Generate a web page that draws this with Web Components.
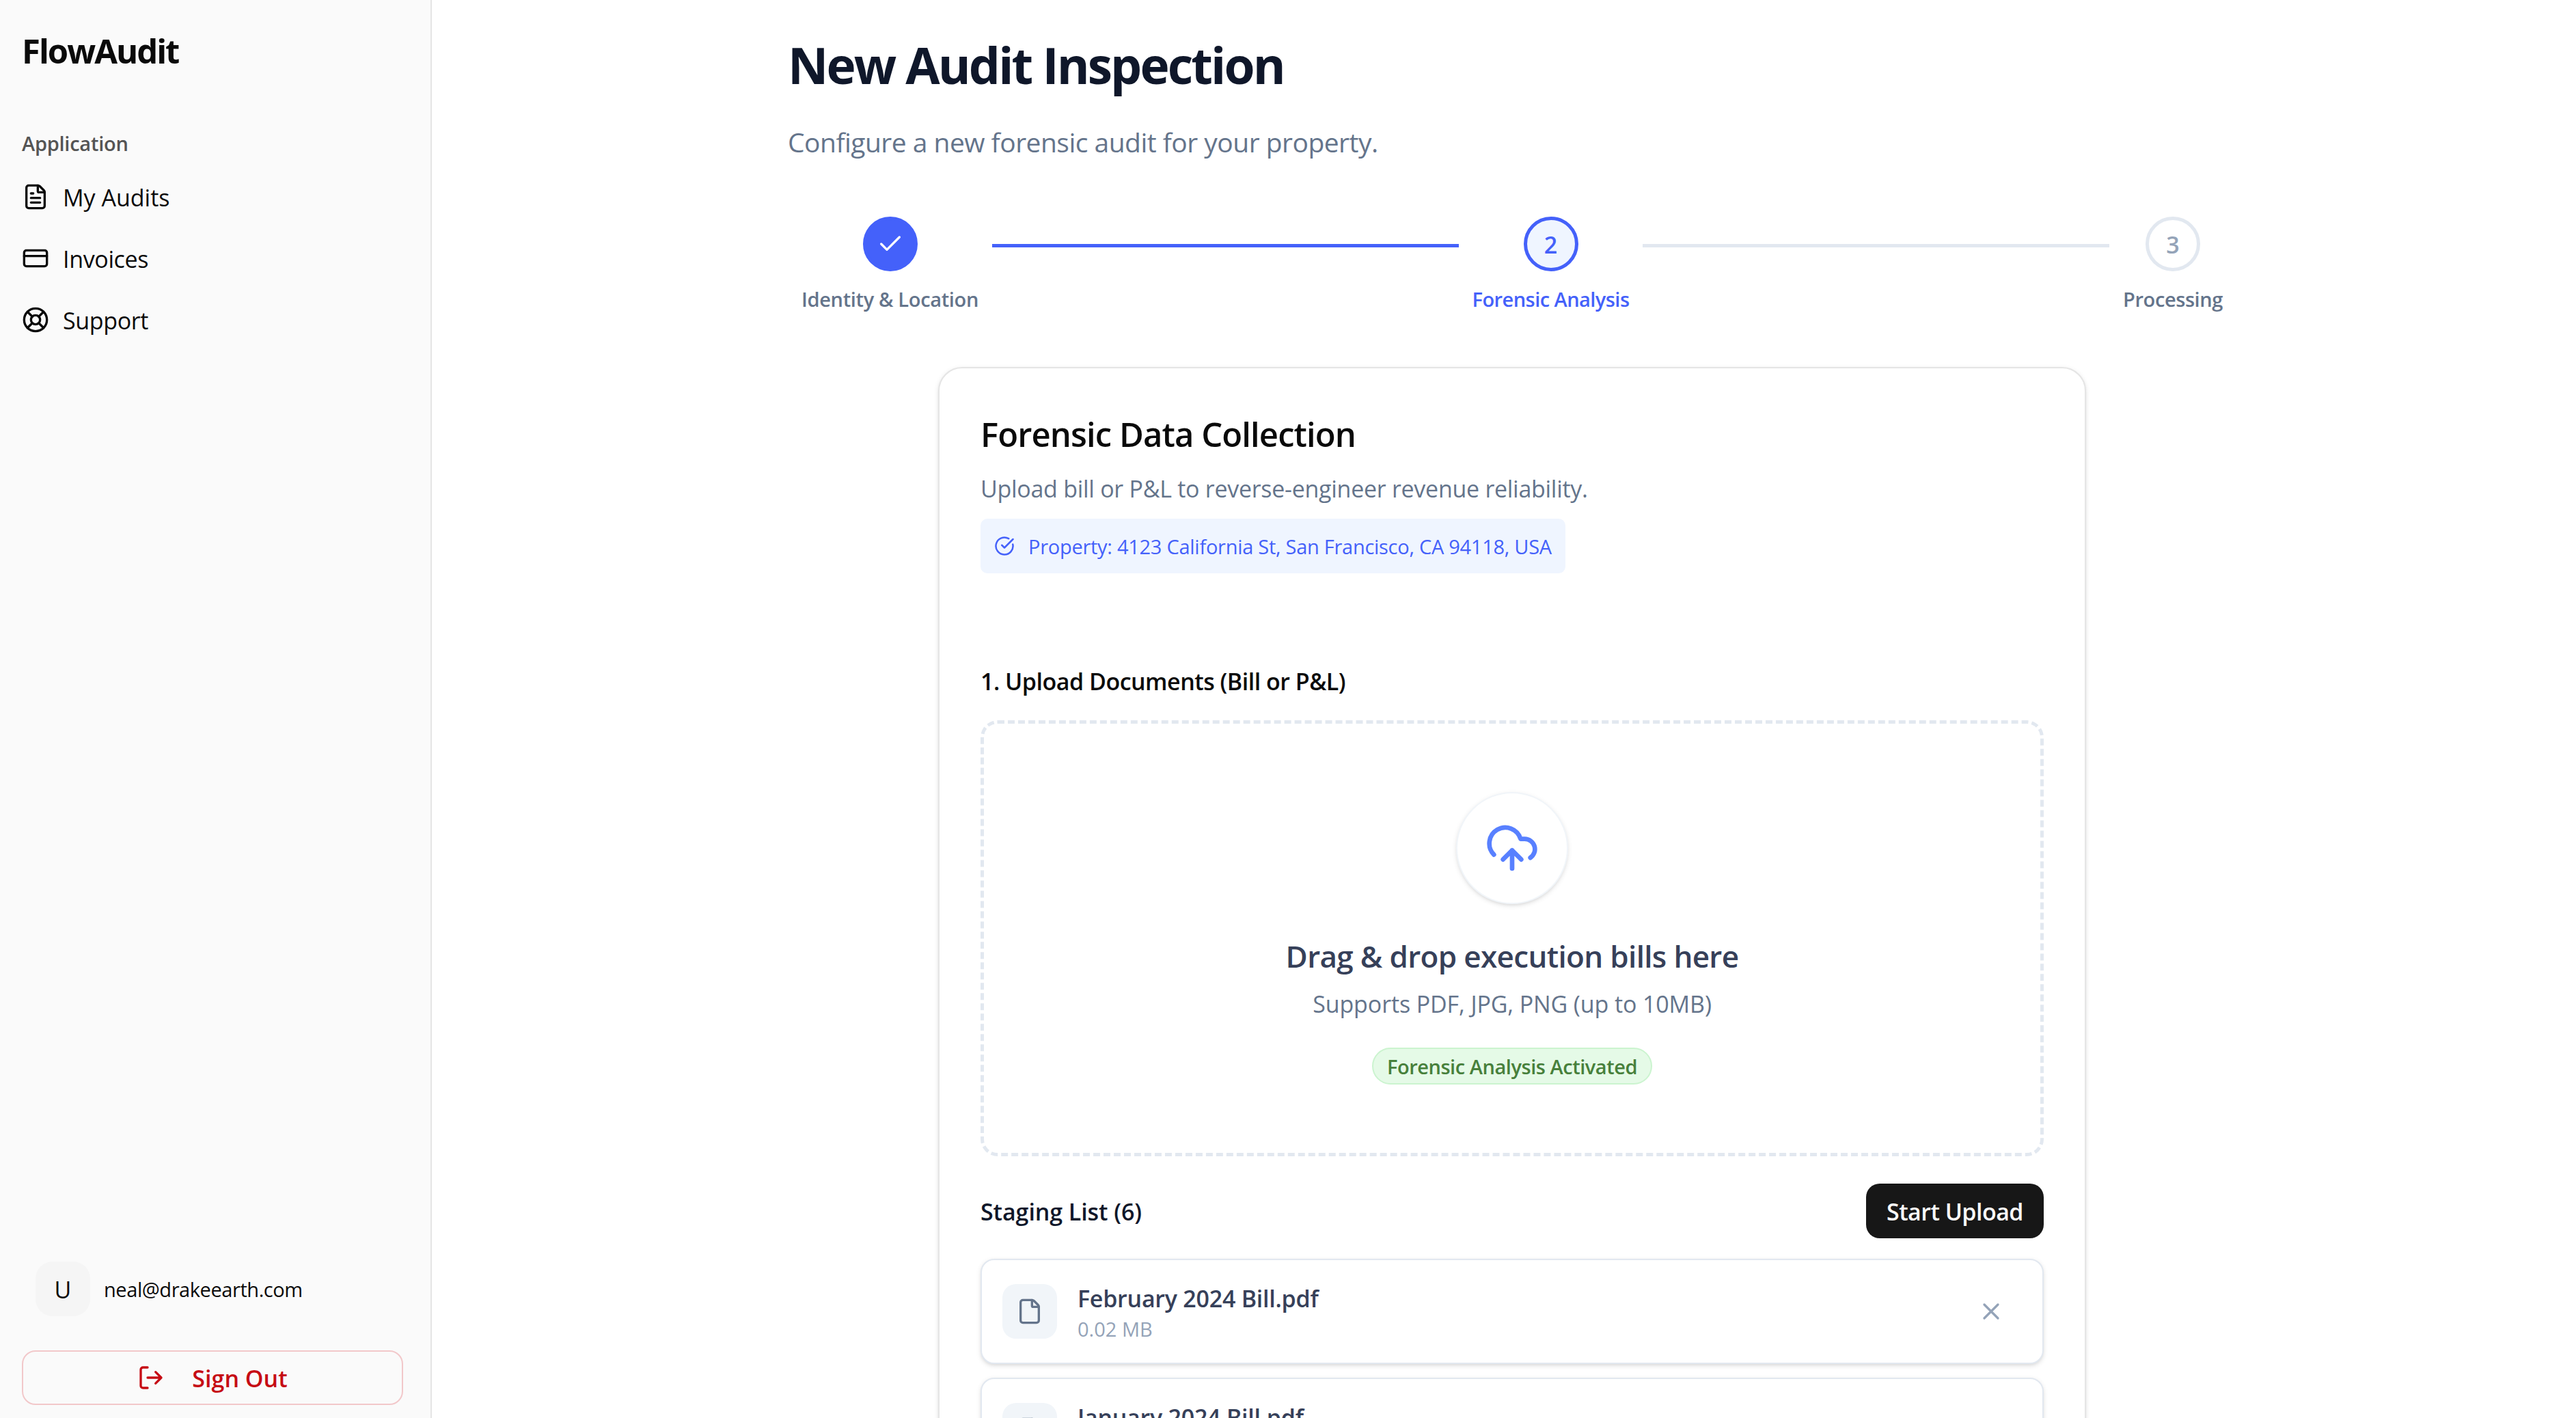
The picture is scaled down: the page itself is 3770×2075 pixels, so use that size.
<!DOCTYPE html>
<html lang="en">
<head>
<meta charset="utf-8">
<title>FlowAudit</title>
<style>
	body {
		background-color: #fff;
		color: #0a0a0a;
		font-family: 'Open Sans', 'Noto Sans', sans-serif;
		height: 2075px;
		margin: 0;
		overflow: hidden;
	}
</style>
</head>
<body>
<flow-app></flow-app>
<script>
const ICONS = {
	'file-text': '<path d="M6 22a2 2 0 0 1-2-2V4a2 2 0 0 1 2-2h8a2.4 2.4 0 0 1 1.704.706l3.588 3.588A2.4 2.4 0 0 1 20 8v12a2 2 0 0 1-2 2z"/><path d="M14 2v5a1 1 0 0 0 1 1h5M10 9H8M16 13H8M16 17H8"/>',
	'credit-card': '<rect width="20" height="14" x="2" y="5" rx="2"/><path d="M2 10h20"/>',
	'life-buoy': '<circle cx="12" cy="12" r="10"/><path d="m4.93 4.93 4.24 4.24M14.83 9.17l4.24-4.24M14.83 14.83l4.24 4.24M9.17 14.83l-4.24 4.24"/><circle cx="12" cy="12" r="4"/>',
	'log-out': '<path d="M9 21H5a2 2 0 0 1-2-2V5a2 2 0 0 1 2-2h4M16 17l5-5-5-5M21 12H9"/>',
	'check': '<path d="M20 6 9 17l-5-5"/>',
	'circle-check': '<path d="M21.801 10A10 10 0 1 1 17 3.335M9 11l3 3L22 4"/>',
	'cloud-upload': '<path d="M12 13v8M4 14.899A7 7 0 1 1 15.71 8h1.79a4.5 4.5 0 0 1 2.5 8.242M8 17l4-4 4 4"/>',
	'file': '<path d="M6 22a2 2 0 0 1-2-2V4a2 2 0 0 1 2-2h8a2.4 2.4 0 0 1 1.704.706l3.588 3.588A2.4 2.4 0 0 1 20 8v12a2 2 0 0 1-2 2z"/><path d="M14 2v5a1 1 0 0 0 1 1h5"/>',
	'x': '<path d="M18 6 6 18M6 6l12 12"/>'
};

class FlowIcon extends HTMLElement {
	constructor() {
		super();
		this.attachShadow({ mode: 'open' });
	}

	connectedCallback() {
		const size = this.getAttribute('size') || 40;
		this.shadowRoot.innerHTML = `
			<style>
				:host {
					display: block;
					flex: none;
					height: ${size}px;
					width: ${size}px;
				}
				svg {
					display: block;
					fill: none;
					stroke: currentColor;
					stroke-linecap: round;
					stroke-linejoin: round;
					stroke-width: 2;
				}
			</style>
			<svg width='${size}' height='${size}' viewBox='0 0 24 24'>${ICONS[this.getAttribute('name')]}</svg>
		`;
	}
}

// One line of text: size, line (height), weight and track (letter spacing) in px
class FlowText extends HTMLElement {
	constructor() {
		super();
		this.attachShadow({ mode: 'open' });
	}

	connectedCallback() {
		const size = this.getAttribute('size') || 34;
		const line = this.getAttribute('line') || 50;
		const weight = this.getAttribute('weight') || 400;
		const track = this.getAttribute('track') || 0;
		this.shadowRoot.innerHTML = `
			<style>
				:host {
					display: block;
					flex: none;
					font-size: ${size}px;
					font-weight: ${weight};
					height: ${line}px;
					letter-spacing: ${track}px;
					line-height: calc(${line}px + 0.08em);
					white-space: nowrap;
				}
			</style>
			<slot></slot>
		`;
	}
}

class FlowNavItem extends HTMLElement {
	constructor() {
		super();
		this.attachShadow({ mode: 'open' });
		this.shadowRoot.innerHTML = `
			<style>
				:host {
					align-items: center;
					display: flex;
					gap: 20px;
					height: 80px;
				}
			</style>
			<flow-icon name='${this.getAttribute('icon')}'></flow-icon>
			<slot></slot>
		`;
	}
}

class FlowSidebar extends HTMLElement {
	constructor() {
		super();
		this.attachShadow({ mode: 'open' });
		this.shadowRoot.innerHTML = `
			<style>
				:host {
					background-color: #fafafa;
					border-right: 2px solid #e5e5e5;
					box-sizing: border-box;
					display: flex;
					flex: none;
					flex-direction: column;
					height: 2075px;
					padding: 38px 40px 19px 32px;
					width: 632px;
				}
				.label {
					color: #545454;
					margin-top: 81px;
				}
				nav {
					display: flex;
					flex-direction: column;
					gap: 10px;
					margin-top: 19px;
				}
				.user {
					align-items: center;
					display: flex;
					gap: 20px;
					margin-top: auto;
					padding-left: 20px;
				}
				.avatar {
					align-items: center;
					background-color: #f5f5f5;
					border-radius: 25px;
					display: flex;
					height: 80px;
					justify-content: center;
					width: 80px;
				}
				button {
					align-items: center;
					background: none;
					border: 2px solid #f2c8ca;
					border-radius: 20px;
					box-sizing: border-box;
					color: #c60c14;
					display: flex;
					font-family: inherit;
					gap: 40px;
					height: 80px;
					justify-content: center;
					margin-top: 50px;
					padding: 0;
					width: 558px;
				}
			</style>
			<flow-text size='49' line='70' weight='700' track='-2'>FlowAudit</flow-text>
			<flow-text class='label' size='29' line='40' weight='600' track='-0.25'>Application</flow-text>
			<nav>
				<flow-nav-item icon='file-text'><flow-text>My Audits</flow-text></flow-nav-item>
				<flow-nav-item icon='credit-card'><flow-text track='-0.35'>Invoices</flow-text></flow-nav-item>
				<flow-nav-item icon='life-buoy'><flow-text track='-0.35'>Support</flow-text></flow-nav-item>
			</nav>
			<div class='user'>
				<div class='avatar'><flow-text>U</flow-text></div>
				<flow-text size='29' line='40' track='-0.43'>neal@drakeearth.com</flow-text>
			</div>
			<button type='button'>
				<flow-icon name='log-out'></flow-icon>
				<flow-text weight='600'>Sign Out</flow-text>
			</button>
		`;
	}
}

class FlowStep extends HTMLElement {
	constructor() {
		super();
		this.attachShadow({ mode: 'open' });
		this.shadowRoot.innerHTML = `
			<style>
				:host {
					align-items: center;
					color: #64748b;
					display: flex;
					flex: none;
					flex-direction: column;
					gap: 20px;
					padding: 0 20px;
				}
				.dot {
					align-items: center;
					background-color: #fff;
					border: 5px solid #e2e8f0;
					border-radius: 50%;
					box-sizing: border-box;
					color: #94a3b8;
					display: flex;
					height: 80px;
					justify-content: center;
					width: 80px;
				}
				:host([state='done']) .dot {
					background-color: #4461fa;
					border-color: #4461fa;
					color: #fff;
				}
				:host([state='current']) {
					color: #4461fa;
				}
				:host([state='current']) .dot {
					background-color: #eff5ff;
					border-color: #4461fa;
					color: #4461fa;
				}
			</style>
			<div class='dot'><slot name='mark'></slot></div>
			<slot></slot>
		`;
	}
}

class FlowStepper extends HTMLElement {
	constructor() {
		super();
		this.attachShadow({ mode: 'open' });
		this.shadowRoot.innerHTML = `
			<style>
				:host {
					display: flex;
				}
				.line {
					background-color: #e2e8f0;
					flex: 1;
					height: 5px;
					margin-top: 40px;
				}
				.line.done {
					background-color: #4461fa;
				}
			</style>
			<flow-step state='done'>
				<flow-icon slot='mark' name='check'></flow-icon>
				<flow-text size='29' line='40' weight='600' track='-0.34'>Identity &amp; Location</flow-text>
			</flow-step>
			<div class='line done'></div>
			<flow-step state='current'>
				<flow-text slot='mark' weight='600'>2</flow-text>
				<flow-text size='29' line='40' weight='600' track='-0.55'>Forensic Analysis</flow-text>
			</flow-step>
			<div class='line'></div>
			<flow-step>
				<flow-text slot='mark' weight='600'>3</flow-text>
				<flow-text size='29' line='40' weight='600' track='-0.4'>Processing</flow-text>
			</flow-step>
		`;
	}
}

class FlowDropzone extends HTMLElement {
	constructor() {
		super();
		this.attachShadow({ mode: 'open' });
		this.shadowRoot.innerHTML = `
			<style>
				:host {
					align-items: center;
					border: 5px dashed #e2e8f0;
					border-radius: 25px;
					box-sizing: border-box;
					display: flex;
					flex-direction: column;
					height: 638px;
					padding-top: 100px;
				}
				.circle {
					background-color: #fff;
					border: 2px solid #f1f5f9;
					border-radius: 50%;
					box-shadow: 0 2.5px 7.5px rgba(0, 0, 0, 0.1), 0 2.5px 5px -2.5px rgba(0, 0, 0, 0.1);
					color: #5880ff;
					padding: 40px;
				}
				.title {
					color: #364059;
					margin-top: 40px;
				}
				.hint {
					color: #64748b;
					margin-top: 10px;
				}
				.badge {
					background-color: #e5fae7;
					border: 2px solid #cbf4cf;
					border-radius: 27px;
					box-sizing: border-box;
					color: #47803b;
					height: 54px;
					margin-top: 40px;
					padding: 5px 20px;
				}
			</style>
			<div class='circle'><flow-icon name='cloud-upload' size='80'></flow-icon></div>
			<flow-text class='title' size='44' line='70' weight='600' track='-0.66'>Drag &amp; drop execution bills here</flow-text>
			<flow-text class='hint' track='-0.12'>Supports PDF, JPG, PNG (up to 10MB)</flow-text>
			<div class='badge'><flow-text size='29' line='40' weight='600' track='-0.46'>Forensic Analysis Activated</flow-text></div>
		`;
	}
}

class FlowFile extends HTMLElement {
	constructor() {
		super();
		this.attachShadow({ mode: 'open' });
		this.shadowRoot.innerHTML = `
			<style>
				:host {
					align-items: center;
					background-color: #fff;
					border: 2px solid #e2e8f0;
					border-radius: 20px;
					box-shadow: 0 2.5px 7.5px rgba(0, 0, 0, 0.1), 0 2.5px 5px -2.5px rgba(0, 0, 0, 0.1);
					box-sizing: border-box;
					display: flex;
					gap: 30px;
					height: 154px;
					padding: 0 30px;
				}
				.thumb {
					align-items: center;
					background-color: #f1f5f9;
					border-radius: 20px;
					color: #64748b;
					display: flex;
					height: 80px;
					justify-content: center;
					width: 80px;
				}
				.info {
					flex: 1;
				}
				.name {
					color: #364059;
				}
				.size {
					color: #94a3b8;
				}
				.remove {
					color: #94a3b8;
					padding: 25px;
				}
			</style>
			<div class='thumb'><flow-icon name='file'></flow-icon></div>
			<div class='info'>
				<flow-text class='name' weight='600' track='-0.25'>${this.getAttribute('name')}</flow-text>
				<flow-text class='size' size='29' line='40'>${this.getAttribute('size')}</flow-text>
			</div>
			<div class='remove'><flow-icon name='x'></flow-icon></div>
		`;
	}
}

class FlowCollection extends HTMLElement {
	constructor() {
		super();
		this.attachShadow({ mode: 'open' });
		this.shadowRoot.innerHTML = `
			<style>
				:host {
					background-color: #fff;
					border: 2px solid #e5e5e5;
					border-radius: 35px;
					box-shadow: 0 2.5px 7.5px rgba(0, 0, 0, 0.1), 0 2.5px 5px -2.5px rgba(0, 0, 0, 0.1);
					box-sizing: border-box;
					display: block;
					padding: 60px;
					width: 1680px;
				}
				.desc {
					color: #64748b;
					margin-top: 20px;
				}
				.property {
					align-items: center;
					background-color: #eff5ff;
					border-radius: 10px;
					box-sizing: border-box;
					color: #4461fa;
					display: flex;
					gap: 20px;
					height: 80px;
					margin-top: 20px;
					padding: 0 20px;
					width: fit-content;
				}
				.label {
					margin: 132px 0 33px;
				}
				.bar {
					align-items: center;
					color: #0f172a;
					display: flex;
					justify-content: space-between;
					margin: 40px 0 30px;
				}
				button {
					background-color: #171717;
					border: 0;
					border-radius: 20px;
					color: #fafafa;
					font-family: inherit;
					height: 80px;
					padding: 0 30px;
				}
				.list {
					display: flex;
					flex-direction: column;
					gap: 20px;
				}
			</style>
			<flow-text size='49' line='70' weight='600' track='-0.91'>Forensic Data Collection</flow-text>
			<flow-text class='desc' track='-0.28'>Upload bill or P&amp;L to reverse-engineer revenue reliability.</flow-text>
			<div class='property'>
				<flow-icon name='circle-check' size='30'></flow-icon>
				<flow-text size='29' line='40' track='-0.27'>Property: 4123 California St, San Francisco, CA 94118, USA</flow-text>
			</div>
			<flow-text class='label' weight='600' track='-0.5'>1. Upload Documents (Bill or P&amp;L)</flow-text>
			<flow-dropzone></flow-dropzone>
			<div class='bar'>
				<flow-text weight='600' track='-0.08'>Staging List (6)</flow-text>
				<button type='button'><flow-text weight='600' track='-0.53'>Start Upload</flow-text></button>
			</div>
			<div class='list'>
				<flow-file name='February 2024 Bill.pdf' size='0.02 MB'></flow-file>
				<flow-file name='January 2024 Bill.pdf' size='0.02 MB'></flow-file>
			</div>
		`;
	}
}

class FlowApp extends HTMLElement {
	constructor() {
		super();
		this.attachShadow({ mode: 'open' });
		this.shadowRoot.innerHTML = `
			<style>
				:host {
					display: flex;
					height: 2075px;
					overflow: hidden;
				}
				main {
					display: flex;
					flex: 1;
					justify-content: center;
					padding: 47px 0 0 24px;
				}
				.page {
					flex: none;
					width: 2120px;
				}
				.title {
					color: #0f172a;
				}
				.intro {
					color: #64748b;
					margin-top: 39px;
				}
				flow-stepper {
					margin-top: 81px;
				}
				flow-collection {
					margin: 80px auto 0;
				}
			</style>
			<flow-sidebar></flow-sidebar>
			<main>
				<div class='page'>
					<flow-text class='title' size='73' line='90' weight='700' track='-2.9'>New Audit Inspection</flow-text>
					<flow-text class='intro' size='39' line='60' track='-0.52'>Configure a new forensic audit for your property.</flow-text>
					<flow-stepper></flow-stepper>
					<flow-collection></flow-collection>
				</div>
			</main>
		`;
	}
}

customElements.define('flow-icon', FlowIcon);
customElements.define('flow-text', FlowText);
customElements.define('flow-nav-item', FlowNavItem);
customElements.define('flow-sidebar', FlowSidebar);
customElements.define('flow-step', FlowStep);
customElements.define('flow-stepper', FlowStepper);
customElements.define('flow-dropzone', FlowDropzone);
customElements.define('flow-file', FlowFile);
customElements.define('flow-collection', FlowCollection);
customElements.define('flow-app', FlowApp);
</script>
</body>
</html>
